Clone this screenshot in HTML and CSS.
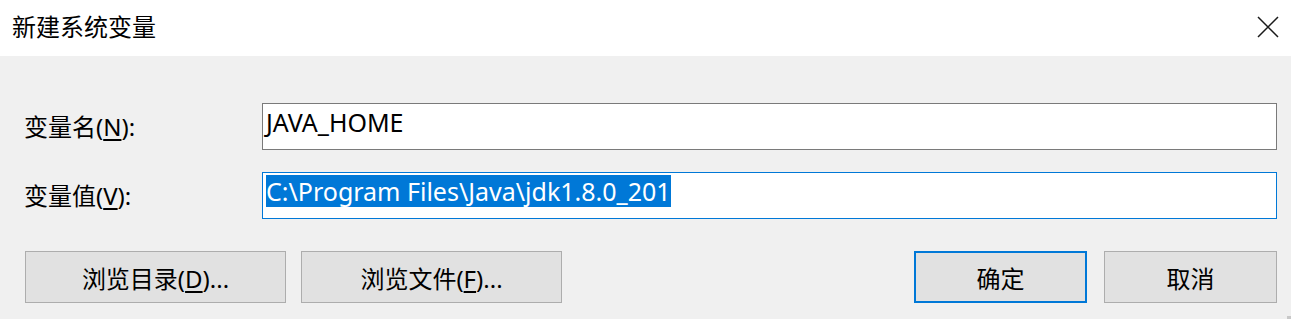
FILE: index.html
```html
<!DOCTYPE html>
<html lang="zh-CN">
<head>
    <meta charset="UTF-8">
    <meta name="viewport" content="width=device-width, initial-scale=1.0">
    <title>新建系统变量</title>
    <link rel="stylesheet" href="styles.css">
</head>
<body>
    <div class="dialog">
        <div class="titlebar">
            <span class="title">新建系统变量</span>
            <span class="close">
                <svg width="22" height="22" viewBox="0 0 22 22">
                    <path d="M1 1 L21 21 M21 1 L1 21" stroke="#1a1a1a" stroke-width="1.5" fill="none"/>
                </svg>
            </span>
        </div>

        <div class="content">
            <div class="fields">
                <label class="label">变量名(<u>N</u>):</label>
                <div class="field">JAVA_HOME</div>

                <label class="label">变量值(<u>V</u>):</label>
                <div class="field focused"><span class="selected">C:\Program Files\Java\jdk1.8.0_201</span></div>
            </div>

            <div class="buttons">
                <div class="left-group">
                    <button class="btn wide">浏览目录(<u>D</u>)...</button>
                    <button class="btn wide">浏览文件(<u>F</u>)...</button>
                </div>
                <div class="right-group">
                    <button class="btn small default">确定</button>
                    <button class="btn small">取消</button>
                </div>
            </div>
        </div>
        <span class="grip"></span>
    </div>
</body>
</html>
```

FILE: styles.css
```css
body {
    margin: 0;
    padding: 0;
    background-color: #f0f0f0;
    font-family: "Noto Sans", "Noto Sans CJK SC", sans-serif;
    font-size: 24px;
    color: #000;
}
.dialog {
    position: relative;
    height: 319px;
    overflow: hidden;
}
.titlebar {
    height: 56px;
    background-color: #fff;
    display: flex;
    align-items: center;
    justify-content: space-between;
    padding: 0 12px 0 12px;
}
.title {
    font-size: 24px;
    line-height: 56px;
    margin-top: -2px;
}
.close {
    display: flex;
    width: 22px;
    height: 22px;
    margin-top: -2px;
}
.content {
    padding: 47px 14px 0 24px;
}
.fields {
    display: grid;
    grid-template-columns: 238px 1fr;
    row-gap: 22px;
    align-items: center;
}
.label {
    line-height: 32px;
}
.label u {
    text-underline-offset: 3px;
}
.field {
    height: 47px;
    box-sizing: border-box;
    border: 1px solid #7a7a7a;
    background-color: #fff;
    padding: 2px 3px;
    font-size: 25px;
    line-height: 32px;
    white-space: nowrap;
}
.field.focused {
    border-color: #0078d7;
}
.selected {
    background-color: #0078d7;
    color: #fff;
    display: inline-block;
}
.buttons {
    display: flex;
    justify-content: space-between;
    margin-top: 32px;
    padding-left: 1px;
}
.left-group {
    display: flex;
    gap: 15px;
}
.right-group {
    display: flex;
    gap: 17px;
}
.btn {
    height: 52px;
    box-sizing: border-box;
    background-color: #e1e1e1;
    border: 1px solid #adadad;
    font-family: inherit;
    font-size: 24px;
    color: #000;
    padding: 0;
}
.btn u {
    text-underline-offset: 3px;
}
.btn.wide {
    width: 261px;
}
.btn.small {
    width: 173px;
}
.btn.default {
    border: 2px solid #0078d7;
}
.grip {
    position: absolute;
    right: 0;
    bottom: 0;
    width: 4px;
    height: 3px;
    background-color: #c8c8c8;
}
```
